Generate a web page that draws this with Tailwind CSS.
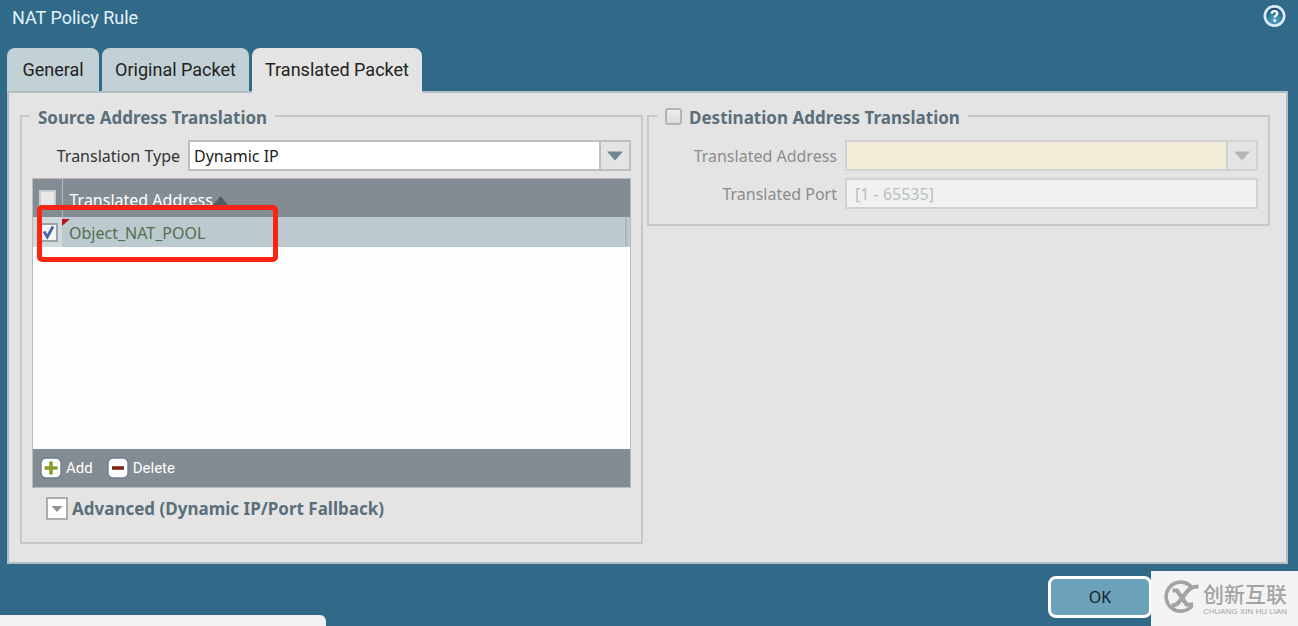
<!DOCTYPE html>
<html lang="en">
<head>
    <meta charset="UTF-8">
    <meta name="viewport" content="width=device-width, initial-scale=1.0">
    <title>NAT Policy Rule</title>
    <!-- Tailwind CSS CDN -->
    <script src="https://cdn.jsdelivr.net/npm/@tailwindcss/browser@4"></script>
</head>
<body class="relative flex flex-col min-h-screen overflow-hidden bg-[#306a88] font-['Noto_Sans',sans-serif] text-base text-[#333]">
    <!-- Title bar -->
    <header class="flex justify-between items-start h-12 pl-3 pr-3 pt-1">
        <h1 class="font-['Roboto',sans-serif] text-[18px] leading-7 text-[#e3f3fa]">NAT Policy Rule</h1>
        <button type="button" aria-label="Help">
            <svg class="block" width="23" height="24" viewBox="0 0 23 24">
                <defs>
                    <radialGradient id="help" cx="50%" cy="75%" r="70%">
                        <stop offset="0" stop-color="#4fb0cc"/>
                        <stop offset="1" stop-color="#1d5580"/>
                    </radialGradient>
                </defs>
                <circle cx="11.5" cy="12" r="11" fill="#dbe9f8"/>
                <circle cx="11.5" cy="12" r="8.3" fill="url(#help)"/>
                <path d="M8.6 9.6C8.8 6.2 14.6 6.4 14.4 9.6C14.3 11.4 11.7 11.4 11.7 13.6" fill="none" stroke="#fff" stroke-width="2.2"/>
                <circle cx="11.7" cy="16.6" r="1.4" fill="#fff"/>
            </svg>
        </button>
    </header>

    <!-- Tabs -->
    <nav role="tablist" class="flex gap-[3px] h-[43px] px-[7px] font-['Roboto',sans-serif] text-[18px] text-[#222]">
        <button type="button" role="tab" class="w-[92px] rounded-t-lg bg-[#c2d1d5] whitespace-nowrap">General</button>
        <button type="button" role="tab" class="w-[147px] rounded-t-lg bg-[#c2d1d5] whitespace-nowrap">Original Packet</button>
        <button type="button" role="tab" aria-selected="true" class="relative z-10 w-[170px] h-[45px] pb-[2px] rounded-t-lg bg-[#e4e4e4] whitespace-nowrap">Translated Packet</button>
    </nav>

    <!-- Panel -->
    <main class="grid grid-cols-2 gap-1 items-start mx-[7px] mr-[10px] pl-[11px] pr-4 pt-[11px] pb-[18px] bg-[#e4e4e4] border-2 border-[#b4bfc5]">
        <fieldset class="min-w-0 border-2 border-[#c8c8c8] px-[10px] pb-[22px]">
            <legend class="-ml-[2px] px-2 pt-1 leading-5 text-[17px] font-bold text-[#5b6f7a]">Source Address Translation</legend>

            <div class="flex items-center gap-2 pt-3">
                <label for="type" class="w-[148px] shrink-0 text-right">Translation Type</label>
                <div class="relative flex-1">
                    <select id="type" class="block w-full h-[31px] pl-1 appearance-none bg-white border-2 border-[#bfbfbf] text-[#222]">
                        <option>Dynamic IP</option>
                    </select>
                    <span class="absolute inset-y-0 right-0 w-8 flex items-center justify-center bg-[#e4e4e4] border-2 border-[#bfbfbf] pointer-events-none">
                        <svg width="16" height="10" viewBox="0 0 16 10"><path d="M0 0.5H16L8 9.5Z" fill="#6f8592"/></svg>
                    </span>
                </div>
            </div>

            <!-- Address grid -->
            <div class="relative mt-[7px] border border-[#b5bbc0]">
                <div class="h-[270px] bg-[#fdfdfd]">
                    <table class="w-full table-fixed border-collapse text-left">
                        <thead>
                            <tr class="h-[38px] bg-[#848c93] text-white">
                                <th class="w-[29px] pl-[6px] border-r border-[#b4bbc0]">
                                    <input type="checkbox" aria-label="Select all" class="block appearance-none size-[17px] bg-[#e6e8ea] border-2 border-[#c9cdd0]">
                                </th>
                                <th class="pl-[7px] pt-1 font-normal">
                                    <span class="flex items-center">Translated Address
                                        <svg width="15" height="9" viewBox="0 0 15 9"><path d="M7.5 0L15 9H0Z" fill="#4f5d67"/></svg>
                                    </span>
                                </th>
                            </tr>
                        </thead>
                        <tbody>
                            <tr class="h-[30px] bg-[#bccad0]">
                                <td class="pl-[6px] bg-[#d0d9dc]">
                                    <label class="relative block size-[19px]">
                                        <input type="checkbox" checked aria-label="Select Object_NAT_POOL" class="block appearance-none size-[19px] bg-[#f4f4f4] border-2 border-[#9da2a6]">
                                        <svg class="absolute inset-0 pointer-events-none" width="19" height="19" viewBox="0 0 19 19"><path d="M5 8.5L8.3 14L14 3.5" fill="none" stroke="#4a62a8" stroke-width="2.8"/></svg>
                                    </label>
                                </td>
                                <td class="relative pl-[7px] text-[#52704f]">
                                    <svg class="absolute left-0 top-[2px]" width="8" height="7" viewBox="0 0 8 7"><path d="M0 0H8L0 7Z" fill="#b8141c"/></svg>
                                    <div class="mr-[3px] pt-[2px] leading-7 border-r-2 border-[#a9b8bf]">Object_NAT_POOL</div>
                                </td>
                            </tr>
                        </tbody>
                    </table>
                </div>
                <div class="flex items-center gap-[14px] h-[38px] px-[7px] bg-[#848c93] font-['Roboto',sans-serif] text-[15px] text-white">
                    <button type="button" class="flex items-center gap-1">
                        <svg width="22" height="22" viewBox="0 0 22 22">
                            <rect x="1" y="1" width="20" height="20" rx="5" fill="#fff" stroke="#6c7f92" stroke-width="1.4"/>
                            <path d="M11 4.5V17.5M4.5 11H17.5" stroke="#8a9c2c" stroke-width="3.6"/>
                        </svg>
                        Add
                    </button>
                    <button type="button" class="flex items-center gap-1">
                        <svg width="22" height="22" viewBox="0 0 22 22">
                            <rect x="1" y="1" width="20" height="20" rx="5" fill="#fff" stroke="#6c7f92" stroke-width="1.4"/>
                            <path d="M5 11H17" stroke="#7c2a14" stroke-width="3.6"/>
                        </svg>
                        Delete
                    </button>
                </div>
                <!-- Highlight around the selected row -->
                <div class="absolute left-1 top-[26px] w-[241px] h-[57px] border-[5px] border-[#fb2414] rounded-[5px] pointer-events-none"></div>
            </div>

            <button type="button" class="flex items-center gap-1 mt-[9px] ml-[14px] text-[17px] leading-[23px] font-bold text-[#5b6f7a]">
                <svg width="22" height="23" viewBox="0 0 22 23">
                    <rect x="1" y="1" width="20" height="21" fill="#fff" stroke="#adadad" stroke-width="2"/>
                    <path d="M5.5 9H16.5L11 15Z" fill="#8d9396"/>
                </svg>
                Advanced (Dynamic IP/Port Fallback)
            </button>
        </fieldset>

        <fieldset class="min-w-0 border-2 border-[#c8c8c8] px-[10px] pb-[15px]">
            <legend class="-ml-[2px] px-2">
                <label class="flex items-center gap-[7px] h-6 text-[17px] leading-5 font-bold text-[#5b6f7a]">
                    <input type="checkbox" class="appearance-none size-[17px] rounded-[3px] border-2 border-[#b3b3b3] bg-linear-to-b from-[#ededed] to-[#dcdcdc]">
                    <span class="pt-1">Destination Address Translation</span>
                </label>
            </legend>

            <div class="flex items-center gap-2 pt-3">
                <label for="address" class="w-[178px] shrink-0 text-right text-[#8c8c8c]">Translated Address</label>
                <div class="relative flex-1">
                    <select id="address" disabled class="block w-full h-[31px] pl-1 appearance-none bg-[#f2ecd9] border-2 border-[#d2d2d2]">
                        <option></option>
                    </select>
                    <span class="absolute inset-y-0 right-0 w-8 flex items-center justify-center bg-[#e4e4e4] border-2 border-[#d2d2d2] pointer-events-none">
                        <svg width="16" height="10" viewBox="0 0 16 10"><path d="M0 0.5H16L8 9.5Z" fill="#b2b6b9"/></svg>
                    </span>
                </div>
            </div>
            <div class="flex items-center gap-2 pt-[7px]">
                <label for="port" class="w-[178px] shrink-0 text-right text-[#8c8c8c]">Translated Port</label>
                <input id="port" type="text" disabled placeholder="[1 - 65535]" class="flex-1 min-w-0 h-[31px] pl-2 bg-[#f1f1f1] border-2 border-[#d2d2d2] placeholder:text-[#b8bfc3]">
            </div>
        </fieldset>
    </main>

    <!-- Footer -->
    <footer class="flex justify-end pt-3 pr-[146px]">
        <button type="button" class="w-[104px] h-[42px] rounded-lg border-[3px] border-white bg-[#6ba2ba] text-[#12202a]">OK</button>
    </footer>

    <!-- Status strip -->
    <div class="absolute left-0 bottom-0 w-[326px] h-[11px] rounded-tr-md bg-[#f2f2f2]"></div>

    <!-- Site badge -->
    <div class="absolute right-0 bottom-0 flex items-center gap-1 w-[147px] h-[55px] pl-3 pb-1 bg-[#f3f3f3] text-[#a3a3a3]">
        <svg class="shrink-0" width="36" height="34" viewBox="0 0 36 34" fill="none" stroke="currentColor">
            <path d="M28 6.5A14.5 14.5 0 1 0 29.5 25" stroke-width="3.6"/>
            <path d="M35.5 6.5C28 6.5 26 9 22.5 13.5L17.5 20C15 23.5 13.5 25.5 8.5 25.5" stroke-width="4.2"/>
            <path d="M9.5 10.5H14L23.5 24.5H30" stroke-width="4.2"/>
        </svg>
        <div class="flex flex-col whitespace-nowrap">
            <span class="font-['Noto_Sans_CJK_SC',sans-serif] text-[21px] leading-[30px] font-medium">创新互联</span>
            <span class="font-['Liberation_Sans',sans-serif] text-[8px] leading-2">CHUANG XIN HU LIAN</span>
        </div>
    </div>
</body>
</html>
